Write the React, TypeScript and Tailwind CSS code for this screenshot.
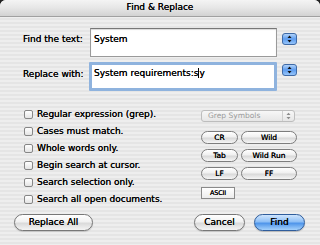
import React from 'react'

const font = { fontFamily: '"DejaVu Sans", "Liberation Sans", sans-serif' }

const PopupArrows = () => (
	<svg width="15" height="12" viewBox="0 0 15 12" className="block">
		<defs>
			<linearGradient id="pa" x1="0" y1="0" x2="0" y2="1">
				<stop offset="0" stopColor="#b9d8fb" />
				<stop offset="0.5" stopColor="#5d9cef" />
				<stop offset="1" stopColor="#9cc9fb" />
			</linearGradient>
		</defs>
		<rect x="0.5" y="0.5" width="14" height="11" rx="2.5" fill="url(#pa)" stroke="#3f6aa6" />
		<path d="M5.5 5 L7.5 2.6 L9.5 5 Z" fill="#111" />
		<path d="M5.5 7 L7.5 9.4 L9.5 7 Z" fill="#111" />
	</svg>
)

const Checkbox = ({ label }: { label: string }) => (
	<div className="flex h-[17px] items-start">
		<div className="mt-[1px] h-[9px] w-[9px] rounded-[2px] border border-[#868686] bg-[linear-gradient(180deg,#ffffff,#e4e4e4)]" />
		<span className="ml-[4px] -mt-[1px] text-[9px] leading-[12px] text-black [text-shadow:0_0_0.4px_#000]">{label}</span>
	</div>
)

const Pill = ({ label, className }: { label: string; className: string }) => (
	<div
		className={
			'flex h-[13px] items-center justify-center rounded-full border border-[#7d7d7d] bg-[linear-gradient(180deg,#ffffff_0%,#f0f0f0_45%,#d9d9d9_55%,#f6f6f6_100%)] text-[7.5px] leading-none text-black [text-shadow:0_0_0.4px_#000] ' +
			className
		}
	>
		{label}
	</div>
)

const options = [
	'Regular expression (grep).',
	'Cases must match.',
	'Whole words only.',
	'Begin search at cursor.',
	'Search selection only.',
	'Search all open documents.'
]

export default function App() {
	return (
		<div className="h-[245px] w-[320px] overflow-hidden bg-[#222]" style={font}>
			<div className="flex h-[245px] flex-col overflow-hidden rounded-t-[6px] bg-[repeating-linear-gradient(180deg,#eeeeee_0px,#eeeeee_2px,#e5e5e5_2px,#e5e5e5_4px)]">
				<div className="flex h-[17px] shrink-0 items-center justify-center border-b border-[#a0a0a0] bg-[linear-gradient(180deg,#f4f4f4,#e6e6e6_50%,#d2d2d2)] text-[9px] text-black [text-shadow:0_0_0.4px_#000]">
					Find &amp; Replace
				</div>

				<div className="mt-[11px] flex items-start pl-[23px]">
					<span className="w-[67px] pt-[5px] text-[9px] leading-[12px] text-black [text-shadow:0_0_0.4px_#000]">Find the text:</span>
					<div className="h-[29px] w-[187px] border border-[#9a9a9a] border-t-[#777] bg-white px-[3px] pt-[4px] text-[9px] leading-[12px] text-black shadow-[inset_0_1px_1px_rgba(0,0,0,0.15)] [text-shadow:0_0_0.4px_#000]">
						System
					</div>
					<div className="ml-[5px] mt-[5px]">
						<PopupArrows />
					</div>
				</div>

				<div className="mt-[5px] flex items-start pl-[22px]">
					<span className="w-[67px] pt-[6px] pl-[1px] text-[9px] leading-[12px] text-black [text-shadow:0_0_0.4px_#000]">Replace with:</span>
					<div className="h-[29px] w-[188px] rounded-[1px] border-[3px] border-[#8fb3de] bg-white px-[2px] pt-[2px] text-[9px] leading-[12px] text-black [text-shadow:0_0_0.4px_#000]">
						System requirements:s<span className="border-l border-black" />y
					</div>
					<div className="ml-[5px] mt-[2px]">
						<PopupArrows />
					</div>
				</div>

				<div className="mt-[18px] flex">
					<div className="flex w-[201px] flex-col pl-[24px]">
						{options.map((o) => (
							<Checkbox key={o} label={o} />
						))}
					</div>
					<div className="flex flex-col">
						<div className="mt-[1px] flex h-[12px] w-[94px] items-center justify-between rounded-[3px] border border-[#bdbdbd] bg-[linear-gradient(180deg,#f7f7f7,#e6e6e6)] pl-[6px] pr-[3px] text-[7.5px] leading-none text-[#9a9a9a]">
							<span>Grep Symbols</span>
							<span className="flex h-[10px] items-center border-l border-[#cfcfcf] pl-[3px]">
								<svg width="5" height="8" viewBox="0 0 5 8">
									<path d="M0.5 3 L2.5 0.8 L4.5 3 Z" fill="#8a8a8a" />
									<path d="M0.5 5 L2.5 7.2 L4.5 5 Z" fill="#8a8a8a" />
								</svg>
							</span>
						</div>
						<div className="mt-[9px] flex flex-col gap-[5px]">
							<div className="flex gap-[3px]">
								<Pill label="CR" className="w-[37px]" />
								<Pill label="Wild" className="w-[56px]" />
							</div>
							<div className="flex gap-[3px]">
								<Pill label="Tab" className="w-[37px]" />
								<Pill label="Wild Run" className="w-[56px]" />
							</div>
							<div className="flex gap-[3px]">
								<Pill label="LF" className="w-[37px]" />
								<Pill label="FF" className="w-[56px]" />
							</div>
						</div>
						<div className="mt-[7px] flex h-[12px] w-[34px] items-center justify-center border border-[#8a8a8a] bg-[linear-gradient(180deg,#ffffff,#ececec)] text-[6.5px] leading-none tracking-[-0.2px] text-black [text-shadow:0_0_0.4px_#000]">
							ASCII
						</div>
					</div>
				</div>

				<div className="mt-[3px] flex items-center pl-[14px] pr-[15px]">
					<div className="flex h-[17px] w-[79px] items-center justify-center rounded-full border border-[#777] bg-[linear-gradient(180deg,#ffffff_0%,#f1f1f1_45%,#dadada_55%,#f4f4f4_100%)] text-[9px] leading-none text-black shadow-[0_1px_1px_rgba(0,0,0,0.15)] [text-shadow:0_0_0.4px_#000]">
						Replace All
					</div>
					<div className="flex-1" />
					<div className="flex h-[17px] w-[51px] items-center justify-center rounded-full border border-[#777] bg-[linear-gradient(180deg,#ffffff_0%,#f1f1f1_45%,#dadada_55%,#f4f4f4_100%)] text-[9px] leading-none text-black shadow-[0_1px_1px_rgba(0,0,0,0.15)] [text-shadow:0_0_0.4px_#000]">
						Cancel
					</div>
					<div className="ml-[9px] flex h-[17px] w-[51px] items-center justify-center rounded-full border border-[#2f5d9c] bg-[linear-gradient(180deg,#cfe5fd_0%,#8ebff6_45%,#4f95ea_55%,#a6d2fb_100%)] text-[9px] leading-none text-black shadow-[0_1px_1px_rgba(0,0,0,0.2)] [text-shadow:0_0_0.4px_#000]">
						Find
					</div>
				</div>
			</div>
		</div>
	)
}
